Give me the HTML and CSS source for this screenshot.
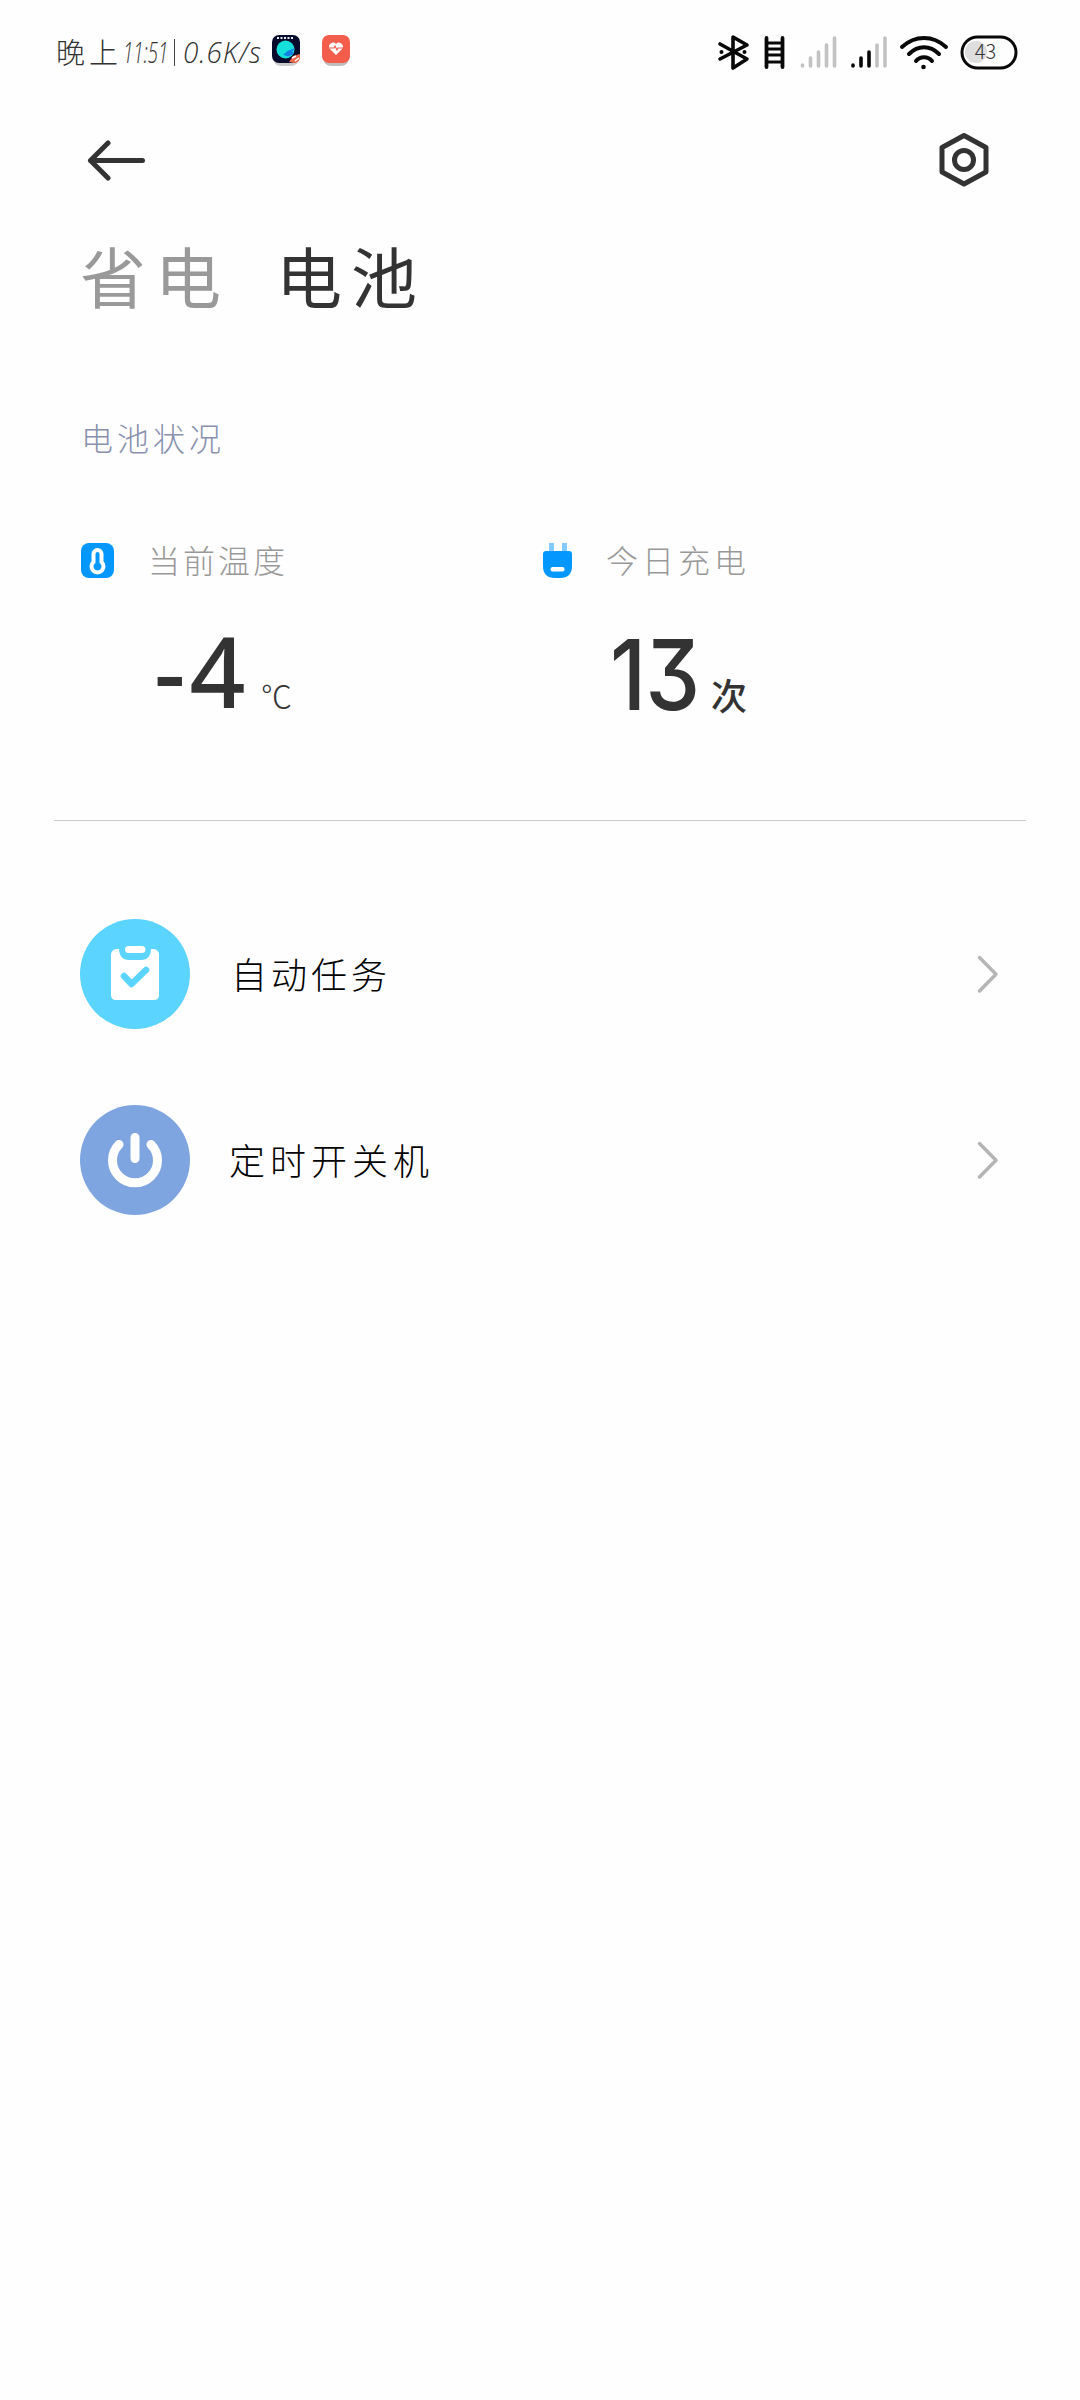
FILE: index.html
```html
<!DOCTYPE html>
<html lang="zh-CN">
<head>
<meta charset="utf-8">
<title>电池</title>
<link rel="stylesheet" href="styles.css">
</head>
<body>
<header class="status">
  <span class="status-day">晚上</span><span class="status-time">11:51</span><span class="status-bar"></span><span class="status-speed">0.6K/s</span>
  <svg class="app app-first" width="30" height="34" viewBox="0 0 30 34">
    <rect x="2" y="4" width="26" height="28" rx="8" fill="#000" opacity=".2"/>
    <rect x="1" y="1" width="28" height="28" rx="7" fill="#080c2c"/>
    <path d="M6 4h17" stroke="#e8eaf4" stroke-width="2" stroke-dasharray="2 1.5"/>
    <circle cx="14.500" cy="15.500" r="9" fill="#14dfdb"/>
    <path d="M12 20c3 0 4-4 7-4l5-2-3 4 2 1c-4 4-8 4-11 1z" fill="#127fe2"/>
    <path d="M18 28l4-6 7-2v4q-1 5-6 5z" fill="#f06a50"/>
    <path d="M21 24l4-2m-1 5l4-3" stroke="#fff" stroke-width="1.500"/>
  </svg>
  <svg class="app app-second" width="30" height="34" viewBox="0 0 30 34">
    <rect x="2" y="4" width="26" height="28" rx="8" fill="#000" opacity=".25"/>
    <rect x="1" y="1" width="28" height="28" rx="7" fill="#f35d4c"/>
    <path d="M15 21l-6.500-6.500a4 4 0 0 1 6.500-4.500a4 4 0 0 1 6.500 4.500z" fill="#fff"/>
    <path d="M8 14h5l1-2 2 4 1-2h5" fill="none" stroke="#f35d4c" stroke-width="1.200"/>
  </svg>
  <svg class="sys" width="322" height="40" viewBox="0 0 322 40" fill="none" stroke="#080808" stroke-width="4" stroke-linecap="round" stroke-linejoin="round">
    <path d="M6 12l27 15-14 9V5l14 8L6 27" stroke-width="3.600"/>
    <circle cx="7.500" cy="20" r="2" fill="#080808" stroke="none"/><circle cx="30.500" cy="20" r="2" fill="#080808" stroke="none"/>
    <path d="M52.500 6v29M68.500 6v29" stroke-width="3.800"/>
    <path d="M53 11h15M53 17h15M53 23h15M53 30h15" stroke-width="3"/>
    <g stroke="#c2c2c2" stroke-width="3.600"><path d="M88.500 33v1M96.500 26v8M104.500 20v14M112.500 13v21M120.500 6v28M163 13v21M171 6v28"/></g>
    <path d="M139 33v1M147 26v8M155 20v14" stroke-width="3.600"/>
    <path d="M188 15c13-12 31-12 44 0M195 22c9-9 21-9 30 0M202 29c4-5 12-5 16 0"/>
    <circle cx="209.500" cy="35" r="2.300" fill="#080808" stroke="none"/>
    <circle cx="262" cy="20" r="11" fill="#dedede" stroke="none"/>
    <rect x="248" y="5" width="54" height="31" rx="15.500" stroke-width="3"/>
    <text class="level" x="271.500" y="27">43</text>
  </svg>
</header>

<nav class="toolbar">
  <svg width="60" height="42" viewBox="0 0 60 42" fill="none" stroke="#333" stroke-width="5" stroke-linecap="round" stroke-linejoin="round"><path d="M56.500 21.500H4.500M22 4L4.500 21.500 22 39"/></svg>
  <svg width="52" height="56" viewBox="0 0 52 56" fill="none" stroke="#333" stroke-width="5" stroke-linejoin="round"><path d="M26 3.500L48 15.500V40L26 52 4 40V15.500Z"/><circle cx="26" cy="28" r="9.500"/></svg>
</nav>

<div class="tabs"><span class="tab">省电</span><span class="tab tab-active">电池</span></div>

<main>
  <h2 class="section">电池状况</h2>
  <div class="stats">
    <section class="stat">
      <div class="stat-head">
        <svg width="33" height="35" viewBox="0 0 33 35"><rect width="33" height="35" rx="8" fill="#0498ff"/><path d="M12.500 11a4 4 0 0 1 8 0v8a6 6 0 1 1-8 0z" fill="none" stroke="#fff" stroke-width="4"/></svg>
        <span>当前温度</span>
      </div>
      <div class="stat-value stat-value-temp"><span class="num num-temp">-4</span><span class="unit unit-c">℃</span></div>
    </section>
    <section class="stat stat-charge">
      <div class="stat-head">
        <svg width="33" height="35" viewBox="0 0 33 35"><path d="M7 0h5v9H7zM20 0h5v9h-5z" fill="#82caff"/><path d="M4 8h23q3 0 3 3v12q0 12-12 12H13Q1 35 1 23V11q0-3 3-3z" fill="#0498ff"/><rect x="8.500" y="24" width="14" height="4.500" rx="2" fill="#fff"/></svg>
        <span>今日充电</span>
      </div>
      <div class="stat-value"><span class="num num-count">13</span><span class="unit unit-times">次</span></div>
    </section>
  </div>
  <div class="list">
    <div class="item">
      <svg width="110" height="110" viewBox="0 0 110 110"><circle cx="55" cy="55" r="55" fill="#5bd4ff"/><path d="M36 30h38q5 1 5 6v40q0 5-5 5H36q-5 0-5-5V36q0-5 5-6z" fill="#fff"/><path d="M39 25h32v4q0 12-10 12H49q-10 0-10-12z" fill="#5bd4ff"/><rect x="45" y="27" width="20.500" height="7" rx="3.500" fill="#fff"/><path d="M44 57l7.500 8L66 51" fill="none" stroke="#5bd4ff" stroke-width="6.500" stroke-linecap="round" stroke-linejoin="round"/></svg>
      <span class="item-text item-task">自动任务</span>
      <svg class="chevron" width="24" height="40" viewBox="0 0 24 40"><path d="M3.500 3.500L20 20.200 3.500 37"/></svg>
    </div>
    <div class="item">
      <svg width="110" height="110" viewBox="0 0 110 110" fill="none" stroke="#fff" stroke-width="9" stroke-linecap="round"><circle cx="55" cy="55" r="55" fill="#7ea5df" stroke="none"/><path d="M39 39.500a22.500 22.500 0 1 0 32 0M55 32.500v21"/></svg>
      <span class="item-text item-power">定时开关机</span>
      <svg class="chevron" width="24" height="40" viewBox="0 0 24 40"><path d="M3.500 3.500L20 20.200 3.500 37"/></svg>
    </div>
  </div>
</main>
</body>
</html>
```
FILE: styles.css
```css
* { box-sizing: border-box; }
body {
  margin: 0;
  width: 1080px;
  min-height: 2400px;
  background: #fefefe;
  color: #333;
  font-family: "Noto Sans CJK SC", sans-serif;
  font-weight: 300;
}
svg { display: block; flex: none; }
.status {
  display: flex;
  align-items: center;
  height: 104px;
  padding-left: 56px;
  font-size: 29px;
  line-height: 36px;
  white-space: nowrap;
}
.status-day { width: 67px; margin-top: -3px; letter-spacing: 4px; }
.status-time, .status-speed {
  font-family: "Open Sans", sans-serif;
  font-style: italic;
  font-size: 30px;
  transform-origin: 0 50%;
}
.status-time { width: 46px; transform: scaleX(0.62); }
.status-bar { width: 1px; height: 27px; margin-left: 5px; background: #444; }
.status-speed { width: 80px; margin-left: 8px; letter-spacing: 1px; transform: scaleX(0.93); }
.app { margin-top: -3px; }
.app-first { margin-left: 8px; }
.app-second { margin-left: 20px; }
.sys { margin-left: auto; margin-right: 44px; }
.level { fill: #333; stroke: none; font: 300 20px "Noto Sans CJK SC", sans-serif; text-anchor: middle; }
.toolbar {
  display: flex;
  justify-content: space-between;
  align-items: center;
  height: 112px;
  padding: 0 90px 0 86px;
}
.tabs {
  display: flex;
  gap: 46px;
  height: 130px;
  padding: 6px 0 0 80px;
  font-size: 66px;
  line-height: 104px;
  letter-spacing: 9px;
}
.tab { color: #999; font-weight: 400; }
.tab-active { color: #333; }
.section {
  margin: 0;
  height: 197px;
  padding: 67px 0 0 81px;
  color: #8991ae;
  font-size: 32px;
  line-height: 48px;
  font-weight: 300;
  letter-spacing: 4px;
}
.stats {
  display: grid;
  grid-template-columns: 461px 1fr;
  height: 278px;
  margin: 0 54px;
  padding-left: 27px;
  border-bottom: 1px solid #ccc;
}
.stat-head {
  display: flex;
  align-items: center;
  gap: 34px;
  height: 35px;
  color: #999;
  font-size: 32px;
  line-height: 35px;
  letter-spacing: 3px;
}
.stat-head span { margin-top: -3px; }
.stat-charge .stat-head { gap: 31px; letter-spacing: 4px; }
.stat-value {
  display: flex;
  align-items: baseline;
  height: 120px;
  margin: 37px 0 0 68px;
  line-height: 120px;
}
.stat-value-temp { margin: 32px 0 0 73px; }
.num { font-weight: 500; }
.num-temp { width: 112px; font-family: "Noto Sans", sans-serif; font-size: 98px; letter-spacing: 4px; }
.num-count { width: 101px; font-family: Inter, sans-serif; font-size: 97px; font-feature-settings: "cv09"; letter-spacing: -1px; transform: scaleX(0.9); transform-origin: 0 50%; }
.unit { font-size: 33px; }
.unit-c { margin-left: -5px; font-size: 31px; }
.unit-times { font-size: 36px; font-weight: 500; }
.list { padding: 60px 80px 0 80px; }
.item { display: flex; align-items: center; height: 186px; color: #000; }
.item-text { flex: 1; margin: -3px 0 0 41px; font-size: 36px; letter-spacing: 4px; }
.item-power { margin-left: 39px; letter-spacing: 5px; }
.chevron { fill: none; stroke: #b5b5b5; stroke-width: 3.5; stroke-linecap: round; stroke-linejoin: round; }
```
